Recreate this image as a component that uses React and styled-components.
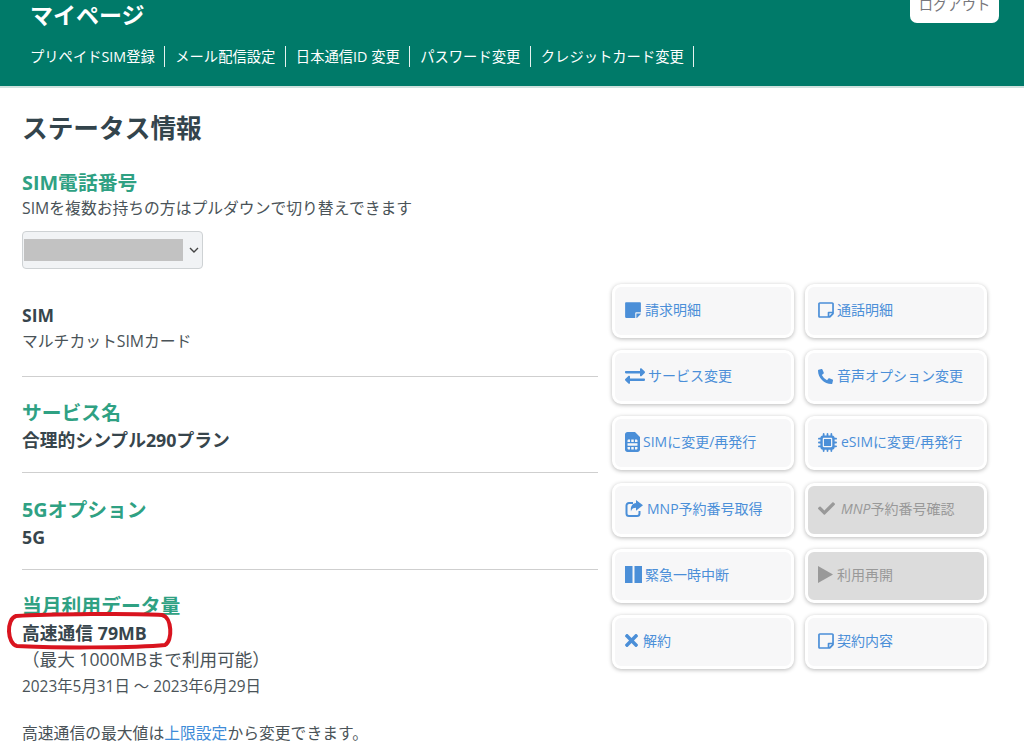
import React from 'react';
import styled, { createGlobalStyle } from 'styled-components';
import {
  FaStickyNote, FaRegStickyNote, FaExchangeAlt, FaPhoneAlt, FaSimCard,
  FaCheck, FaTimes,
} from 'react-icons/fa';
import { FaMicrochip } from 'react-icons/fa6';

const Global = createGlobalStyle`
  html, body { margin: 0; padding: 0; background: #fff; }
  body {
    height: 746px; overflow: hidden;
    font-family: "Open Sans", "Noto Sans CJK JP", sans-serif;
    color: #3f4a50; font-size: 15.8px; line-height: 26px;
  }
`;

const Header = styled.header`
  height: 86px; background: #007a69; border-bottom: 2px solid #cfe2de;
  padding: 0 25px 0 30px; display: flex; justify-content: space-between; align-items: flex-start;
`;
const HeaderLeft = styled.div`display: flex; flex-direction: column;`;
const Title = styled.h2`
  margin: 0; font-size: 23px; line-height: 30px; font-weight: 700; color: #fff;
`;
const Nav = styled.nav`display: flex; margin-top: 16px;`;
const NavItem = styled.a`
  color: #fff; font-size: 14.3px; line-height: 21px; padding-right: 9.5px; margin-right: 10px;
  border-right: 1px solid #e6f2ef; white-space: nowrap;
`;
const Logout = styled.button`
  width: 89px; height: 23px; border: 0; background: #fff; border-radius: 0 0 7px 7px;
  color: #77777c; font: inherit; font-size: 14.3px; line-height: 10px; padding: 0 0 13px;
  overflow: hidden; display: flex; align-items: flex-end; justify-content: center;
`;

const Main = styled.main`
  display: grid; grid-template-columns: 576px 376px; column-gap: 14px; padding: 0 0 0 22px; height: 658px; overflow: hidden;
`;
const LeftCol = styled.div`padding-top: 23px;`;
const PageTitle = styled.h1`
  margin: 0 0 22px; font-size: 25.7px; line-height: 36px; font-weight: 700; color: #33444c;
`;
const SectionHead = styled.h3`
  margin: 0 0 -2px; font-size: 19.8px; line-height: 28px; font-weight: 700; color: #2fa183;
`;
const PlainHead = styled.div`font-size: 17.5px; line-height: 26px; font-weight: 700; color: #37454c;`;
const Bold = styled.div`font-size: 17.8px; line-height: 30px; font-weight: 700; color: #37454c;`;
const Text = styled.div`font-size: 15.8px; line-height: 26px; color: #4a5358; white-space: nowrap;`;
const LargeText = styled(Text)`font-size: 17.6px;`;
const DateText = styled(Text)`font-size: 15.4px; margin-top: 2px;`;
const Rule = styled.hr`
  margin: ${p => (p.$tight ? 17 : 22)}px 0 ${p => (p.$tight ? 22.5 : 22)}px; border: 0; border-top: 1px solid #cfcfcf;
`;
const SelectBox = styled.div`
  box-sizing: border-box; width: 181px; height: 38px; margin: 10px 0 33px;
  background: #f1f3f5; border: 1px solid #ced2d4; border-radius: 4px;
  display: flex; align-items: center; padding: 0 0 0 1px; gap: 6px;
`;
const Masked = styled.div`width: 159px; height: 22px; background: #c2c2c2;`;
const LinkText = styled.a`color: #3f8cd8;`;
const Marked = styled.div`position: relative; width: fit-content; margin-bottom: -2px;`;
const Ring = styled.svg`position: absolute; left: -15px; top: -5px; overflow: visible; pointer-events: none;`;
const Gap = styled.div`height: 20px;`;

const RightCol = styled.div`
  padding-top: 196px; display: grid; grid-template-columns: 182px 182px; column-gap: 11px;
  grid-auto-rows: 54px; row-gap: 12.2px; align-content: start;
`;
const Button = styled.a`
  box-sizing: border-box; display: flex; align-items: center; gap: ${p => p.$gap ?? 4}px;
  padding: 0 0 2px 10px; border: 3px solid #fff; border-radius: 9px;
  background: ${p => (p.$off ? '#dcdcdc' : '#f7f7f8')};
  box-shadow: 0 1px 4px rgba(0,0,0,.28);
  color: ${p => (p.$off ? '#999' : '#4b8fd8')}; font-size: 14px; white-space: nowrap;
  svg { flex: none; }
`;
const Oblique = styled.em`font-style: italic;`;

const NoteSolid = styled(FaStickyNote)`width: 16px; height: 18px;`;
const NoteOutline = styled(FaRegStickyNote)`width: 16px; height: 18px;`;
const SimGlyph = styled(FaSimCard)`width: 15px; height: 20px;`;
const CrossGlyph = styled(FaTimes)`width: 13px; height: 19px;`;

const ShareIcon = () => (
  <svg width="18" height="17" viewBox="0 0 18 17">
    <path d="M8 3H4a2.5 2.5 0 0 0-2.5 2.5v8A2.5 2.5 0 0 0 4 16h8a2.5 2.5 0 0 0 2.5-2.5V11" fill="none" stroke="currentColor" strokeWidth="2" />
    <path d="M11 0l7 5.3-7 5.4V7.8C8 7.8 6.5 9 6 11.5 5 6.5 8 3.3 11 3.1Z" fill="currentColor" />
  </svg>
);
const PauseIcon = () => (
  <svg width="17" height="17" viewBox="0 0 17 17">
    <path d="M0 0h7.5v17H0zM9.5 0H17v17H9.5z" fill="currentColor" />
  </svg>
);
const PlayIcon = () => (
  <svg width="15" height="17" viewBox="0 0 15 17">
    <path d="M0 0l15 8.5L0 17z" fill="currentColor" />
  </svg>
);

const buttons = [
  { icon: <NoteSolid />, t: '請求明細' },
  { icon: <NoteOutline />, t: '通話明細', gap: 3 },
  { icon: <FaExchangeAlt size={20} />, t: 'サービス変更', gap: 3 },
  { icon: <FaPhoneAlt size={15} />, t: '音声オプション変更' },
  { icon: <SimGlyph />, t: 'SIMに変更/再発行', gap: 3 },
  { icon: <FaMicrochip size={19} />, t: 'eSIMに変更/再発行', gap: 4 },
  { icon: <ShareIcon />, t: 'MNP予約番号取得' },
  { icon: <FaCheck size={17} />, t: <><Oblique>MNP</Oblique>予約番号確認</>, off: true, gap: 6 },
  { icon: <PauseIcon />, t: '緊急一時中断', gap: 3 },
  { icon: <PlayIcon />, t: '利用再開', off: true },
  { icon: <CrossGlyph />, t: '解約', gap: 5 },
  { icon: <NoteOutline />, t: '契約内容', gap: 3 },
];

const navItems = ['プリペイドSIM登録', 'メール配信設定', '日本通信ID 変更', 'パスワード変更', 'クレジットカード変更'];

export default function App() {
  return (
    <>
      <Global />
      <Header>
        <HeaderLeft>
          <Title>マイページ</Title>
          <Nav>{navItems.map(n => <NavItem key={n}>{n}</NavItem>)}</Nav>
        </HeaderLeft>
        <Logout>ログアウト</Logout>
      </Header>
      <Main>
        <LeftCol>
          <PageTitle>ステータス情報</PageTitle>
          <SectionHead>SIM電話番号</SectionHead>
          <Text>SIMを複数お持ちの方はプルダウンで切り替えできます</Text>
          <SelectBox>
            <Masked />
            <svg width="10" height="6" viewBox="0 0 10 6"><path d="M1 1l4 4 4-4" fill="none" stroke="#444" strokeWidth="1.4" /></svg>
          </SelectBox>
          <PlainHead>SIM</PlainHead>
          <Text>マルチカットSIMカード</Text>
          <Rule />
          <SectionHead>サービス名</SectionHead>
          <Bold>合理的シンプル290プラン</Bold>
          <Rule $tight />
          <SectionHead>5Gオプション</SectionHead>
          <Bold>5G</Bold>
          <Rule $tight />
          <SectionHead>当月利用データ量</SectionHead>
          <Marked>
            <Bold>高速通信 79MB</Bold>
            <Ring width="166" height="35" viewBox="0 0 166 35">
              <path d="M9 3 C40 1 130 0 155 2 C165 4 166 28 158 32 C130 35 40 35 10 33 C0 31 -1 6 9 3Z" fill="none" stroke="#d9141f" strokeWidth="4" />
            </Ring>
          </Marked>
          <LargeText>（最大 1000MBまで利用可能）</LargeText>
          <DateText>2023年5月31日 ～ 2023年6月29日</DateText>
          <Gap />
          <Text>高速通信の最大値は<LinkText>上限設定</LinkText>から変更できます。</Text>
        </LeftCol>
        <RightCol>
          {buttons.map(({ icon, t, off, gap }, i) => (
            <Button key={i} $off={off} $gap={gap}>{icon}<span>{t}</span></Button>
          ))}
        </RightCol>
      </Main>
    </>
  );
}
